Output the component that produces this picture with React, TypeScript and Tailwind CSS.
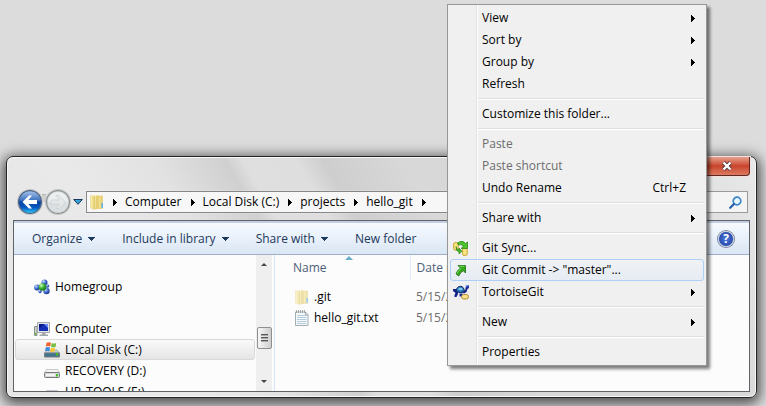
import React from "react";

function RightArrow({ className = "" }: { className?: string }) {
  return (
    <svg viewBox="0 0 4 7" className={`h-[7px] w-1 shrink-0 fill-current ${className}`} shapeRendering="crispEdges" aria-hidden="true">
      <path d="M0 0h1v1h1v1h1v1h1v1h-1v1h-1v1h-1v1h-1z" />
    </svg>
  );
}

function DownArrow() {
  return (
    <svg viewBox="0 0 7 4" className="h-1 w-[7px] shrink-0 fill-[#1e395b]" shapeRendering="crispEdges" aria-hidden="true">
      <path d="M0 0h7v1h-1v1h-1v1h-1v1h-1v-1h-1v-1h-1v-1h-1z" />
    </svg>
  );
}

function FolderIcon({ faded = false }: { faded?: boolean }) {
  return (
    <svg viewBox="0 0 16 16" className={faded ? "size-4 shrink-0 opacity-60" : "size-4 shrink-0"} aria-hidden="true">
      <defs>
        <linearGradient id="folderFront" x1="0" x2="1" y1="0" y2="0">
          <stop offset="0" stopColor="#fdf5b8" />
          <stop offset="1" stopColor="#e2c862" />
        </linearGradient>
      </defs>
      <path d="M5 1h5v14H5z" fill="#faf0b4" />
      <path d="M10 2h3.500v12.500H8z" fill="url(#folderFront)" stroke="#dcc56c" strokeWidth=".5" />
      <path d="M1.500 1.500 6 2.500v13L1.500 14z" fill="url(#folderFront)" stroke="#e0c974" strokeWidth=".5" />
      <path d="M7 1.500 10 2v12.500L6.500 15.500z" fill="#e6cf72" />
      <path d="M12.500 9h1.500v5h-1.500z" fill="#5fb0ea" />
    </svg>
  );
}

function TextFileIcon() {
  return (
    <svg viewBox="0 0 16 16" className="size-4 shrink-0" aria-hidden="true">
      <path d="M1.500 2h10l2.500 2.500v11h-12.500z" fill="#f7fafc" stroke="#a3adb2" />
      <path d="M3 5.500h9.500M3 7.500h9.500M3 9.500h9.500M3 11.500h9.500M3 13.500h9.500" stroke="#b3cbdb" />
      <path d="M2.500 0v3M4.500 0v3M6.500 0v3M8.500 0v3M10.500 0v3" stroke="#999" strokeWidth=".8" />
      <path d="M11.500 2v3H14" fill="#dce4e9" stroke="#8d999f" strokeWidth=".7" />
    </svg>
  );
}

function HomegroupIcon() {
  return (
    <svg viewBox="0 0 16 16" className="size-4 shrink-0" aria-hidden="true">
      <defs>
        <radialGradient id="blueBall" cx=".35" cy=".3" r=".7">
          <stop offset="0" stopColor="#cfe2ff" />
          <stop offset=".5" stopColor="#4a73cf" />
          <stop offset="1" stopColor="#1d3a96" />
        </radialGradient>
        <radialGradient id="greenBall" cx=".35" cy=".3" r=".7">
          <stop offset="0" stopColor="#d5ffc0" />
          <stop offset=".5" stopColor="#3fb537" />
          <stop offset="1" stopColor="#167718" />
        </radialGradient>
      </defs>
      <circle cx="10.500" cy="3.500" r="3" fill="url(#blueBall)" />
      <circle cx="3" cy="8.500" r="2.900" fill="url(#blueBall)" />
      <circle cx="12.500" cy="12" r="3.200" fill="url(#blueBall)" />
      <circle cx="13.500" cy="7" r="1.800" fill="url(#blueBall)" />
      <circle cx="6" cy="12.500" r="1.700" fill="url(#blueBall)" />
      <circle cx="8.500" cy="8" r="3.800" fill="url(#greenBall)" />
    </svg>
  );
}

function ComputerIcon() {
  return (
    <svg viewBox="0 0 16 16" className="size-4 shrink-0" aria-hidden="true">
      <path d="M.5 5.500h2.500v9H.5z" fill="#d3d8d3" stroke="#8a908a" />
      <path d="M1 12h1.500v1.500H1z" fill="#46b834" />
      <path d="M3.500 1.500h12v10h-12z" fill="#e4e6e8" stroke="#a2a6aa" />
      <path d="M5 3h9v7H5z" fill="#1530b5" />
      <path d="M10 3h4v4z" fill="#6b8df5" />
      <path d="M5 3h5l-5 5z" fill="#0a1683" />
      <path d="M8 12h3.500v1.500H14V15H5.500v-1.500H8z" fill="#a2a6a9" />
    </svg>
  );
}

function DriveIcon({ system = false }: { system?: boolean }) {
  return (
    <svg viewBox="0 0 16 16" className="size-4 shrink-0" aria-hidden="true">
      {system ? (
        <>
          <path d="M3 8h10l2.500 3H.5z" fill="#c4d2d8" stroke="#8b999f" strokeWidth=".6" />
          <path d="M.5 11h15v4H.5z" fill="#42758d" stroke="#777f83" />
          <path d="M2.500 .8q2-1 4.500 0L6.200 4.500Q4 3.500 1.800 4.500z" fill="#ee642b" />
          <path d="M7.800 1q2 1 4.400 0L11.500 5q-2.200 1-4.500-.2z" fill="#75bd3d" />
          <path d="M1.700 5.400q2-1 4.300 0L5.300 9.200Q3 8.300 1 9.200z" fill="#3c88d9" />
          <path d="M6.800 5.800q2 1 4.400 0L10.500 9.600q-2 1-4.300-.2z" fill="#f8c62f" />
        </>
      ) : (
        <>
          <path d="M2.500 6.500h11l2 3.500H.5z" fill="#f5f5f5" stroke="#b8babb" strokeWidth=".8" />
          <rect x=".5" y="9.500" width="15" height="5" rx="1" fill="#d5d7d8" stroke="#77797a" />
          <path d="M2 11h9v2H2z" fill="#f3f3f3" />
        </>
      )}
      <path d="M12 11h2v2.500h-2z" fill="#43c51f" />
    </svg>
  );
}

function SyncIcon() {
  return (
    <svg viewBox="0 0 16 16" className="size-4 shrink-0" aria-hidden="true">
      <rect x=".6" y="2.600" width="4.600" height="7.500" rx="1.500" fill="#f8e581" stroke="#c9a534" />
      <rect x="9.600" y="8" width="4.600" height="7.400" rx="1.500" fill="#f8e581" stroke="#c9a534" />
      <path d="M4.500 3Q9.500-.5 12.500 3.500L14.500 2v6.500H8l2.300-2Q8.500 3.500 5.500 5z" fill="#4cc32b" stroke="#207b13" strokeWidth=".7" />
      <path d="M3 6.500q.5 3 3 3.500V8l3 3.200L6 14v-2Q2.500 11 3 6.500z" fill="#48b727" stroke="#207b13" strokeWidth=".6" />
    </svg>
  );
}

function CommitIcon() {
  return (
    <svg viewBox="0 0 16 16" className="size-4 shrink-0" aria-hidden="true">
      <path d="M5 3.500h7.500V11L10.300 8.700Q7 10.500 5.800 14L3 12Q4 8.300 7.500 6z" fill="#35a91d" stroke="#1d6f12" strokeWidth=".8" />
      <path d="M6.800 4.300h4.500M8.200 6.500Q5 8.500 4.200 11.600" fill="none" stroke="#7ad95a" />
    </svg>
  );
}

function TortoiseIcon() {
  return (
    <svg viewBox="0 0 16 16" className="size-4 shrink-0" aria-hidden="true">
      <path d="M0 5h3l2 3v2L3.500 13H1.500V11l1-2L0 7zM9 8l3-1 .8-4 1.200-1.500h2V4l-1.500 1L13.500 8 11 9.500z" fill="#14228b" />
      <path d="M3 7.500Q3.500 2.500 7.500 2.300 11 2.500 11.500 7.500 7.500 9.800 3 7.500z" fill="#2d78bd" stroke="#0c2362" />
      <path d="M5 5q2-2.500 5 0Q7.500 7.500 5 5z" fill="#82cfed" />
      <path d="M12.800 1.500h2.700v1.800h-2.700z" fill="#3e65dc" />
      <rect x="8.500" y="10.500" width="7" height="4.500" rx="2.200" fill="#f6df88" stroke="#b58c35" />
      <path d="M6.500 9.500H10l-2 3H6.500z" fill="#1b2d92" />
    </svg>
  );
}

function NavButtons() {
  return (
    <div className="flex h-7 w-[54px] shrink-0 items-center justify-between px-px">
      <button aria-label="Back" className="size-6 rounded-full shadow-[0_0_0_1px_#c4c4c4]">
        <svg viewBox="0 0 24 24" className="size-6">
          <defs>
            <linearGradient id="backFill" x1="0" x2="0" y1="0" y2="1">
              <stop offset="0" stopColor="#a9c6ea" />
              <stop offset=".42" stopColor="#3f74c2" />
              <stop offset=".5" stopColor="#0742a0" />
              <stop offset=".75" stopColor="#075ac3" />
              <stop offset="1" stopColor="#31d4fb" />
            </linearGradient>
          </defs>
          <circle cx="12" cy="12" r="11.400" fill="url(#backFill)" stroke="#4b6387" strokeWidth="1.200" />
          <path d="M4.500 12 11 5.500h3L10.500 10H19v4h-8.500l3.500 4.500h-3z" fill="#fff" />
        </svg>
      </button>
      <span className="-mt-2 h-2 flex-1 border-t border-[#b5b5b5] bg-[#cfcfcf]" />
      <button aria-label="Forward" className="size-6 rounded-full shadow-[0_0_0_1px_#c4c4c4]">
        <svg viewBox="0 0 24 24" className="size-6">
          <circle cx="12" cy="12" r="11.400" fill="#dadfe1" stroke="#8c9194" strokeWidth="1.200" />
          <path d="M2 12a10 10 0 0 1 20 0z" fill="#eceeef" />
          <path d="M19.500 12 13 5.500h-3l3.500 4.500H5v4h8.500L10 18.500h3z" fill="#e5e8e9" stroke="#c6cbce" strokeWidth=".6" />
        </svg>
      </button>
    </div>
  );
}

const crumbs = ["Computer", "Local Disk (C:)", "projects", "hello_git"];

function AddressRow() {
  return (
    <nav aria-label="Location" className="flex h-7 items-center pr-[2px] pl-1">
      <NavButtons />
      <button aria-label="Recent locations" className="ml-[2px] flex w-[13px] shrink-0 justify-start">
        <svg viewBox="0 0 10 6" className="h-[6px] w-[10px]">
          <path d="M.7.500h8.600L5 5.300z" fill="#38a2d7" stroke="#17375f" />
        </svg>
      </button>
      <div className="flex h-[22px] flex-1 items-center border border-[#85878a] bg-[#f7f7f7] pl-[2px] shadow-[0_0_1px_#fff]">
        <FolderIcon />
        <RightArrow className="ml-2" />
        {crumbs.map((crumb) => (
          <React.Fragment key={crumb}>
            <button className="ml-2 whitespace-nowrap">{crumb}</button>
            <RightArrow className="ml-[9px]" />
          </React.Fragment>
        ))}
      </div>
      <div className="ml-2 flex h-[22px] w-[200px] shrink-0 items-center border border-[#9a9a9a] bg-[#f4f4f4] pr-[5px]">
        <input aria-label="Search hello_git" className="min-w-0 flex-1 bg-transparent px-1 outline-none" />
        <svg viewBox="0 0 13 13" className="size-[13px] shrink-0" aria-hidden="true">
          <circle cx="8" cy="5" r="3.800" fill="#eaf6ff" stroke="#3987cb" strokeWidth="1.700" />
          <path d="M5 8 1.200 11.800" stroke="#2360a8" strokeWidth="2.200" strokeLinecap="round" />
        </svg>
      </div>
    </nav>
  );
}

function CommandBar() {
  return (
    <div className="flex h-[34px] items-center border-t-2 border-b border-t-[#c4cee2] border-b-[#a0afc8] bg-linear-to-b from-[#f7fafe] from-0% via-[#e8f0fa] via-50% to-[#dae6f4] pr-[15px] pl-[18px] text-[#1e395b]">
      <div className="flex flex-1 gap-[27px]">
        {["Organize", "Include in library", "Share with"].map((label) => (
          <button key={label} className="flex items-center gap-[6px] whitespace-nowrap">
            {label}
            <DownArrow />
          </button>
        ))}
        <button className="whitespace-nowrap">New folder</button>
      </div>
      <button aria-label="Help" className="flex size-4 items-center justify-center rounded-full border border-[#c3cde0] bg-radial from-[#4f7be0] to-[#1d3a95] text-[12px] leading-none font-bold text-white shadow-[0_0_0_1px_#7c879b]">
        ?
      </button>
    </div>
  );
}

function TreeItem({ label, icon, nested = false, selected = false }: { label: string; icon: React.ReactNode; nested?: boolean; selected?: boolean }) {
  return (
    <li className="px-px">
      <button
        className={`flex h-[21px] w-full items-center gap-[5px] rounded-[3px] border whitespace-nowrap ${nested ? "pl-7" : "pl-[18px]"} ${
          selected ? "border-[#d9d9d9] bg-linear-to-b from-[#fafafa] to-[#e5e5e5]" : "border-transparent"
        }`}
      >
        {icon}
        {label}
      </button>
    </li>
  );
}

function Sidebar() {
  return (
    <aside className="flex w-[261px] shrink-0 overflow-hidden border-r border-[#d6e5f5]">
      <ul className="flex-1 pt-[21px]">
        <TreeItem label="Homegroup" icon={<HomegroupIcon />} />
        <li className="h-[21px]" />
        <TreeItem label="Computer" icon={<ComputerIcon />} />
        <TreeItem label="Local Disk (C:)" icon={<DriveIcon system />} nested selected />
        <TreeItem label="RECOVERY (D:)" icon={<DriveIcon />} nested />
        <TreeItem label="HP_TOOLS (E:)" icon={<DriveIcon />} nested />
      </ul>
      <div className="mr-[2px] flex w-4 shrink-0 flex-col items-center bg-[#efefef] py-2" aria-hidden="true">
        <span className="border-x-[3px] border-b-[3px] border-x-transparent border-b-[#444]" />
        <span className="flex-[62]" />
        <span className="flex h-[22px] w-[15px] flex-col items-center justify-center gap-px rounded-xs border border-[#8f8f8f] bg-linear-to-r from-[#f7f7f7] to-[#cfcfcf]">
          <i className="h-[2px] w-[7px] border-b border-[#aaa] bg-[#555]" />
          <i className="h-[2px] w-[7px] border-b border-[#aaa] bg-[#555]" />
          <i className="h-[2px] w-[7px] border-b border-[#aaa] bg-[#555]" />
        </span>
        <span className="flex-[32]" />
        <span className="border-x-[3px] border-t-[3px] border-x-transparent border-t-[#444]" />
      </div>
    </aside>
  );
}

function FileList() {
  const files = [
    { name: ".git", icon: <FolderIcon faded />, date: "5/15/2012 1:22 PM" },
    { name: "hello_git.txt", icon: <TextFileIcon />, date: "5/15/2012 1:24 PM" },
  ];
  return (
    <div className="min-w-0 flex-1 overflow-hidden">
      <table className="w-full table-fixed text-left">
        <thead className="text-[#4c607a]">
          <tr className="h-[25px]">
            <th className="relative w-[135px] border-r border-[#deeaf7] p-0 pl-[18px] font-normal">
              <svg viewBox="0 0 8 4" className="absolute top-px left-[70px] h-1 w-2" aria-hidden="true">
                <path d="M4 0 8 4H0z" fill="#6aaecb" />
              </svg>
              Name
            </th>
            <th className="p-0 pl-[6px] font-normal">Date modified</th>
          </tr>
        </thead>
        <tbody>
          <tr className="h-[6px]" />
          {files.map((file) => (
            <tr key={file.name} className="h-[21px]">
              <td className="p-0 pl-[19px]">
                <span className="flex items-center gap-1">
                  {file.icon}
                  {file.name}
                </span>
              </td>
              <td className="p-0 pl-[6px] text-[#6d6d6d]">{file.date}</td>
            </tr>
          ))}
        </tbody>
      </table>
    </div>
  );
}

function ExplorerWindow() {
  return (
    <section
      aria-label="hello_git"
      className="mr-[9px] ml-[6px] rounded-[7px] border border-[#252525] bg-[linear-gradient(60deg,#e6e6e6_0%,#e9e9e9_22%,#e2e2e2_32%,#d0d0d0_40%,#dfdfdf_42%,#dedede_48%,#cecece_51%,#d8d8d8_60%,#d6d6d6_80%,#e9e9e9_100%)] px-[6px] pb-[5px] shadow-[inset_0_0_0_1px_#f7f7f7,0_3px_13px_3px_rgba(0,0,0,0.65)]"
    >
      <header className="flex h-[31px] justify-end">
        <button
          aria-label="Close"
          className="flex h-[19px] w-[47px] items-center justify-center rounded-b-[4px] border border-t-0 border-[#5d2922] bg-linear-to-b from-[#e5a18f] from-0% via-[#c9432c] via-50% to-[#dc7a61] shadow-[0_0_0_1px_#f3dfdb]"
        >
          <svg viewBox="0 0 12 10" className="h-[10px] w-3" aria-hidden="true">
            <path d="M2.500 1.500 9.500 8.500M9.500 1.500 2.500 8.500" stroke="#55383a" strokeWidth="4" />
            <path d="M2.500 1.500 9.500 8.500M9.500 1.500 2.500 8.500" stroke="#fff" strokeWidth="2.400" />
          </svg>
        </button>
      </header>
      <AddressRow />
      <main className="mt-1 border border-[#5f6368] bg-[#fcfcfc]">
        <CommandBar />
        <div className="flex h-[136px]">
          <Sidebar />
          <FileList />
        </div>
      </main>
    </section>
  );
}

type MenuEntry = { label: string; submenu?: boolean; disabled?: boolean; active?: boolean; shortcut?: string; icon?: React.ReactNode };

const menuGroups: MenuEntry[][] = [
  [{ label: "View", submenu: true }, { label: "Sort by", submenu: true }, { label: "Group by", submenu: true }, { label: "Refresh" }],
  [{ label: "Customize this folder..." }],
  [{ label: "Paste", disabled: true }, { label: "Paste shortcut", disabled: true }, { label: "Undo Rename", shortcut: "Ctrl+Z" }],
  [{ label: "Share with", submenu: true }],
  [
    { label: "Git Sync...", icon: <SyncIcon /> },
    { label: 'Git Commit -> "master"...', icon: <CommitIcon />, active: true },
    { label: "TortoiseGit", icon: <TortoiseIcon />, submenu: true },
  ],
  [{ label: "New", submenu: true }],
  [{ label: "Properties" }],
];

function ContextMenu() {
  return (
    <div
      role="menu"
      className="absolute top-1 left-[447px] w-[260px] border border-[#979797] bg-[#f0f0f0] bg-[linear-gradient(to_right,transparent_28px,#e2e3e3_28px,#e2e3e3_29px,#fff_29px,#fff_30px,transparent_30px)] p-[2px] shadow-[3px_3px_3px_rgba(0,0,0,0.5)]"
    >
      {menuGroups.map((group, index) => (
        <React.Fragment key={group[0].label}>
          {index > 0 && (
            <div role="separator" className="flex h-2 items-center pl-7">
              <span className="h-[2px] w-full border-t border-b border-t-[#dedede] border-b-white" />
            </div>
          )}
          {group.map((entry) => (
            <button
              key={entry.label}
              role="menuitem"
              disabled={entry.disabled}
              className={`flex h-[22px] w-full items-center rounded-[3px] border pr-2 pl-[2px] text-left whitespace-nowrap ${
                entry.active ? "border-[#aecff7] bg-linear-to-b from-[#f0f2f6]/80 to-[#e4ebf5]/80" : "border-transparent"
              } ${entry.disabled ? "text-[#6d6d6d]" : ""}`}
            >
              <span className="flex w-[29px] shrink-0">{entry.icon}</span>
              <span className="flex-1">{entry.label}</span>
              {entry.shortcut && <span className="mr-[9px]">{entry.shortcut}</span>}
              {entry.submenu && <RightArrow />}
            </button>
          ))}
        </React.Fragment>
      ))}
    </div>
  );
}

export default function App() {
  return (
    <div className="relative min-h-screen overflow-hidden bg-[#dcdcdc] pt-[156px] pb-2 font-['Open_Sans','Noto_Sans',sans-serif] text-[12px] leading-4 text-black">
      <ExplorerWindow />
      <ContextMenu />
    </div>
  );
}
